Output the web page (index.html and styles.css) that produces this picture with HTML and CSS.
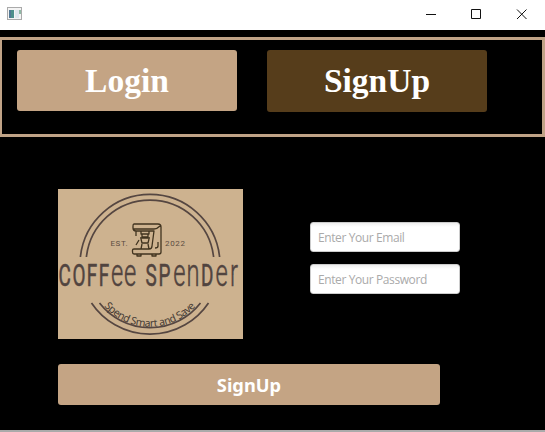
FILE: index.html
```html
<!DOCTYPE html>
<html lang="en">
<head>
<meta charset="utf-8">
<title>Coffee Spender</title>
<link rel="stylesheet" href="styles.css">
</head>
<body>
<div class="window">
  <header class="titlebar">
    <svg class="app-icon" width="16" height="14" viewBox="0 0 16 14">
      <rect x=".5" y=".5" width="14" height="12" fill="#f4f4f4" stroke="#aaa"/>
      <rect x="2" y="3" width="5" height="8" fill="#4d8f8b"/>
      <rect x="2" y="3" width="2" height="8" fill="#527894"/>
      <rect x="8" y="3" width="4" height="8" fill="#dfe7ed"/>
      <rect x="12" y="3" width="2" height="4" fill="#8fb9a5"/>
    </svg>
    <svg class="controls" width="138" height="29" viewBox="0 0 138 29">
      <path d="M19 14.500h10M64.500 9.500h9v9h-9zM110 9.500l9.500 9.500M119.500 9.500L110 19" fill="none" stroke="#111"/>
    </svg>
  </header>
  <nav class="tabs">
    <button class="tab login">Login</button>
    <button class="tab signup">SignUp</button>
  </nav>
  <main class="content">
    <svg class="logo" width="185" height="150" viewBox="0 0 185 150">
      <rect width="185" height="150" fill="#cdb28f"/>
      <g class="ring">
        <path d="M22.400 68A70 70 0 0 1 161.600 68"/>
        <path d="M28.400 68A64 64 0 0 1 155.600 68"/>
        <path d="M33.500 114A70.500 70.500 0 0 0 150.500 114"/>
        <path d="M41.500 114A64 64 0 0 0 142.500 114"/>
      </g>
      <g class="machine">
        <path d="M76 35h24q3 0 3 3v25q0 2-2 2H76q-1.500 0-1.500-2v-2q0-1 1.500-1h15q3 0 3-3l2-15H78q-3 0-3-3v-2q0-2 1-2zM75 40h21q3 0 6-3M78 42v5M83 42v3h8v-3M84 45v3h6v-3M82 49h10M83 50l1 4h6l1-4M81 51l-3 5M84 55l-1 5h8l-1-5M100 53v4q0 2-3 2M79 65v2h4v-2M94 65v2h4v-2"/>
      </g>
      <g class="small">
        <text x="52.500" y="57" textLength="17">EST.</text>
        <text x="107" y="57" textLength="20">2022</text>
      </g>
      <text class="word" transform="scale(.6 1)" y="97.500"><tspan x=".8 24.200 48 68">COFF</tspan><tspan class="low" x="88.500 110">ee</tspan><tspan x="137"> </tspan><tspan x="146 167.500">SP</tspan><tspan class="low" x="192 214">en</tspan><tspan x="238.500">D</tspan><tspan class="low" x="262.500 286.500">er</tspan></text>
      <path id="motto" d="M45.500 116.500A61.500 61.500 0 0 0 138.500 116.500" fill="none"/>
      <text class="motto"><textPath href="#motto" startOffset="1" textLength="103">Spend Smart and Save</textPath></text>
    </svg>
    <form class="fields">
      <input type="email" placeholder="Enter Your Email">
      <input type="password" placeholder="Enter Your Password">
    </form>
    <button class="submit">SignUp</button>
  </main>
</div>
</body>
</html>
```
FILE: styles.css
```css
* { box-sizing: border-box; }
body { margin: 0; background: #000; }
.window {
  display: flex;
  flex-direction: column;
  width: 545px;
  height: 432px;
  overflow: hidden;
  background: #000;
  border-bottom: 2px solid #aaa;
}
.titlebar {
  display: flex;
  flex: none;
  align-items: flex-start;
  justify-content: space-between;
  height: 30px;
  background: #fff;
}
.app-icon { margin: 7px 0 0 7px; }
.tabs {
  display: flex;
  flex: none;
  align-items: flex-start;
  gap: 30px;
  height: 100px;
  margin-top: 7px;
  padding: 10px 0 0 15px;
  border: 3px solid #c0a387;
  border-width: 3px 3px 3px 2px;
}
button {
  padding: 0;
  border: 0;
  border-radius: 3px;
  color: #fff;
  background: #c4a484;
}
.tab {
  width: 220px;
  height: 62px;
  font: bold 33.5px "Liberation Serif", serif;
}
.login { height: 61px; }
.signup { background: #563d1b; }
.content {
  display: grid;
  grid-template-columns: 185px 150px;
  column-gap: 67px;
  row-gap: 25px;
  padding: 52px 0 0 58px;
}
.logo { display: block; }
.fields {
  display: flex;
  flex-direction: column;
  gap: 12px;
  padding-top: 33px;
}
input {
  width: 150px;
  height: 30px;
  padding: 1px 7px 0;
  border: 1px solid #ccc;
  border-radius: 3px;
  background: linear-gradient(#eee, #fff 4px);
  font: 12px "Open Sans", sans-serif;
  letter-spacing: -.4px;
}
input::placeholder { color: #aaa; }
.submit {
  grid-column: 1 / -1;
  width: 382px;
  height: 41px;
  padding-bottom: 1px;
  font: bold 18.3px "Noto Sans", sans-serif;
}
.ring { fill: none; stroke: #554641; stroke-width: 1.7; }
.machine { fill: none; stroke: #40331f; stroke-width: 1.3; stroke-linejoin: round; }
.small { font: 8px Roboto, sans-serif; fill: #5c4d42; }
.word { font: 400 31.5px Roboto, sans-serif; fill: #51443f; stroke: #51443f; stroke-width: .6; }
.low { font-size: 39.5px; font-weight: 300; stroke-width: .5; }
.motto { font: 10.5px "Noto Sans", sans-serif; fill: #473c35; }
```
